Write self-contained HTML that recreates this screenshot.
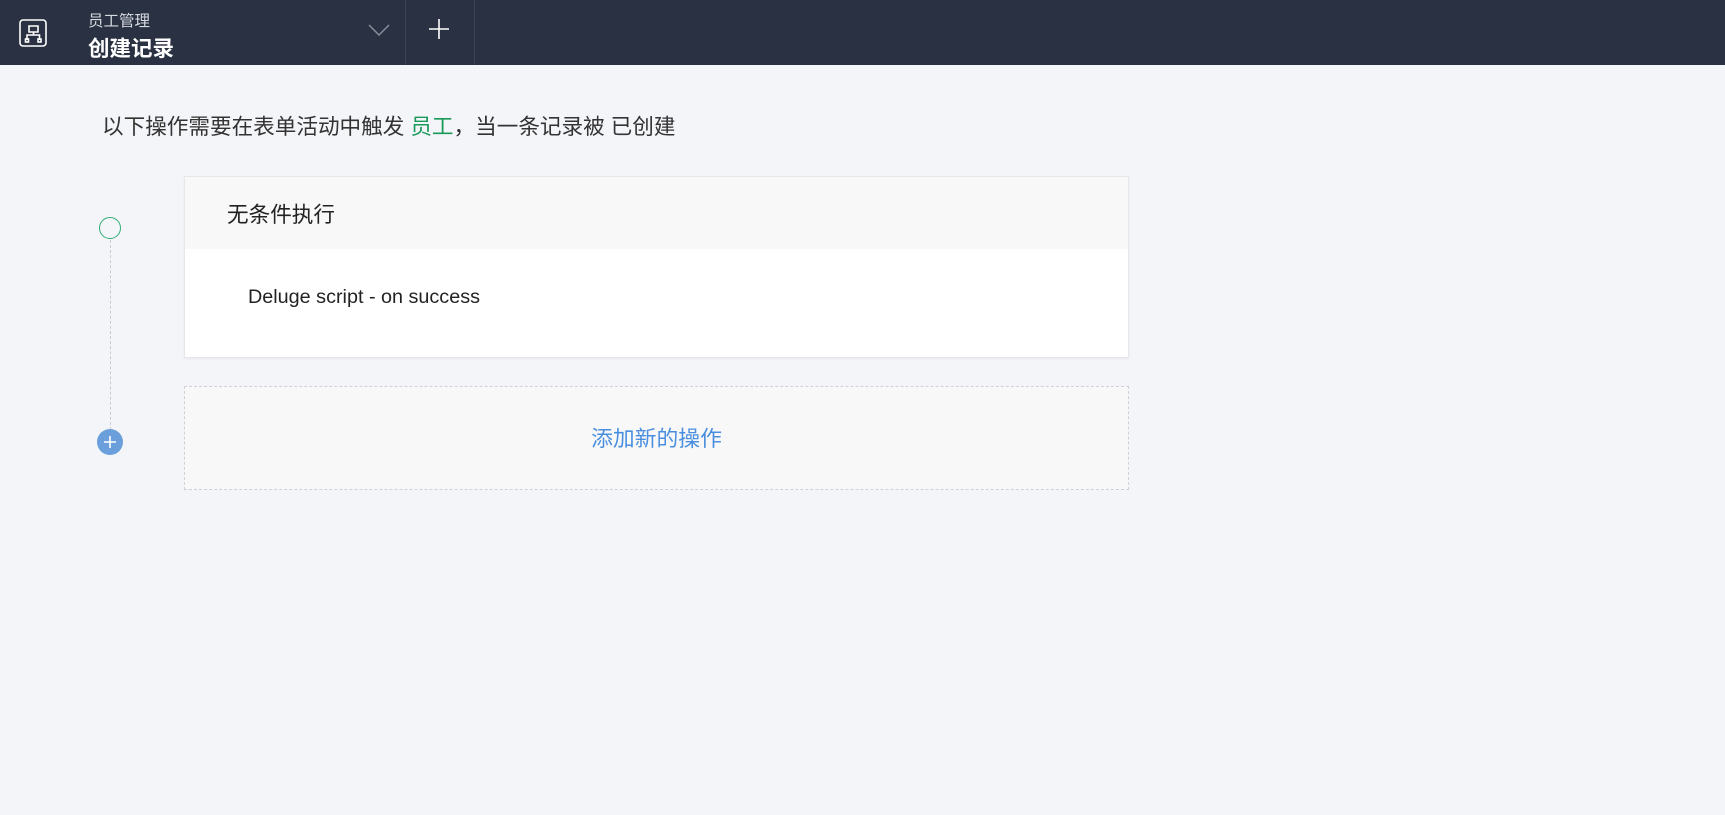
<!DOCTYPE html>
<html><head><meta charset="utf-8"><style>
*{margin:0;padding:0;box-sizing:border-box}
body{width:1725px;height:815px;background:#f4f5f9;font-family:"Liberation Sans","Noto Sans CJK SC",sans-serif;position:relative;overflow:hidden}
.hdr{position:absolute;left:0;top:0;width:1725px;height:65px;background:#2a3142}
.abs{position:absolute}
</style></head><body>
<div class="hdr">
 <svg class="abs" style="left:19px;top:19px" width="28" height="28" viewBox="0 0 28 28" fill="none" stroke="#fff" stroke-width="1.6">
  <rect x="1" y="1" width="26" height="26" rx="3"/>
  <path d="M10 7h9v6h-9zM14.5 13v3H8v5M14.5 16h6v5"/>
  <rect x="6.5" y="20" width="3" height="3"/><rect x="19" y="20" width="3" height="3"/>
 </svg>
 <div class="abs" style="left:88px;top:9px;color:#d6d9e0;font-size:15.5px">员工管理</div>
 <div class="abs" style="left:88px;top:32px;color:#fff;font-size:21.5px;font-weight:bold">创建记录</div>
 <svg class="abs" style="left:368px;top:24px" width="22" height="12" viewBox="0 0 22 12" fill="none" stroke="#8a909c" stroke-width="1.4"><path d="M1 1l10 10 10-10"/></svg>
 <div class="abs" style="left:405px;top:0;width:1px;height:65px;background:#3d4556"></div>
 <div class="abs" style="left:474px;top:0;width:1px;height:65px;background:#3d4556"></div>
 <svg class="abs" style="left:429px;top:19px" width="20" height="20" viewBox="0 0 20 20" stroke="#fff" stroke-width="1.6"><path d="M10 0v20M0 10h20"/></svg>
</div>
<div class="abs" style="left:102px;top:110px;font-size:21.6px;color:#333">以下操作需要在表单活动中触发 <span style="color:#1a9a5a">员工</span>，当一条记录被 已创建</div>
<div class="abs" style="left:99px;top:217px;width:22px;height:22px;border:1.5px solid #2fae74;border-radius:50%"></div>
<div class="abs" style="left:110px;top:240px;height:190px;border-left:1px dashed #c8ccd2"></div>
<div class="abs" style="left:97px;top:429px;width:26px;height:26px;border-radius:50%;background:#6a9fdc"></div>
<svg class="abs" style="left:103px;top:435px" width="14" height="14" stroke="#fff" stroke-width="1.6"><path d="M7 1v12M1 7h12"/></svg>
<div class="abs" style="left:184px;top:176px;width:945px;height:182px;background:#fff;border:1px solid #e6e7ea;box-shadow:0 1px 2px rgba(0,0,0,.05)">
 <div style="height:72px;background:#f8f8f8;padding:21px 0 0 42px;font-size:21.6px;color:#222">无条件执行</div>
 <div style="padding:37px 0 0 63px;font-size:19.8px;color:#222">Deluge script - on success</div>
</div>
<div class="abs" style="left:184px;top:386px;width:945px;height:104px;background:#f8f8f8;border:1px dashed #cfd1d5;text-align:center;padding-top:35px;font-size:21.8px;color:#4a8fdf">添加新的操作</div>
</body></html>
